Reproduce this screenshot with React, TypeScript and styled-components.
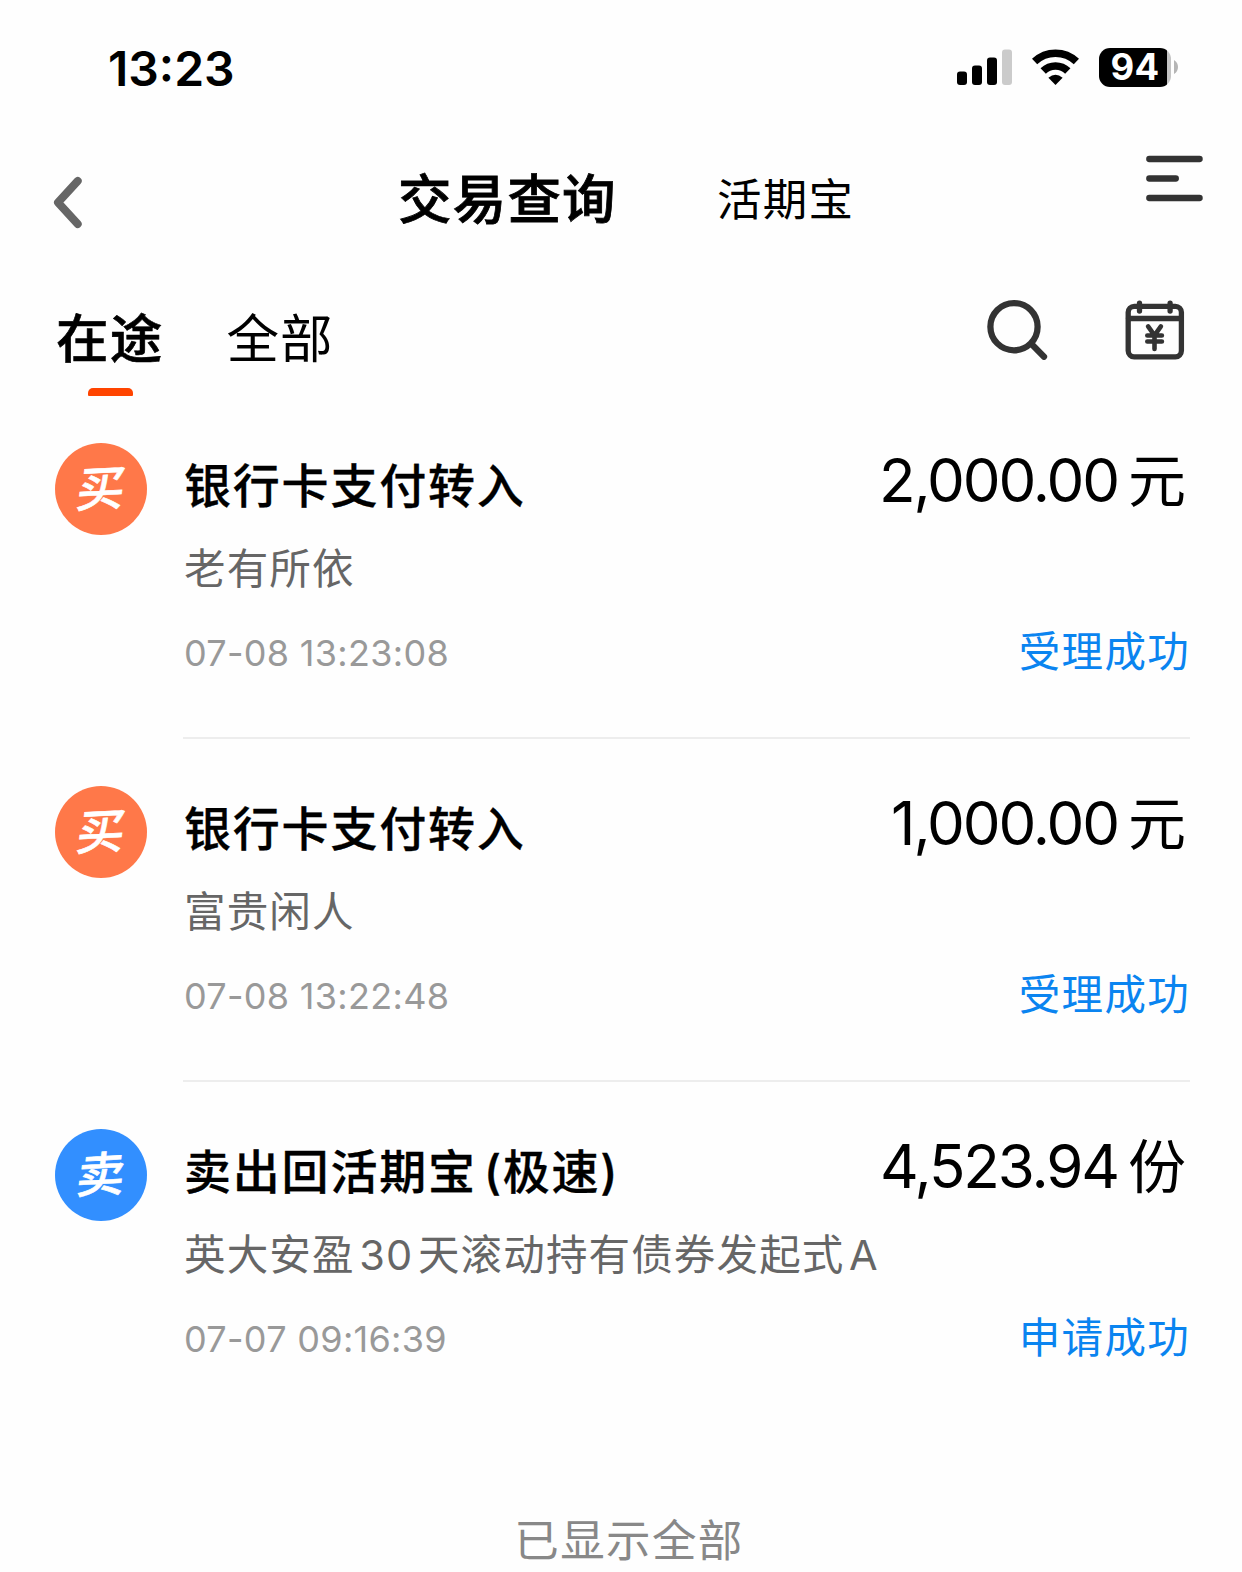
import React from "react";
import styled, { createGlobalStyle } from "styled-components";

const GlobalStyle = createGlobalStyle`
  * { box-sizing: border-box; }
  html, body { margin: 0; padding: 0; background: #fff; }
  body { font-family: Inter, "Noto Sans CJK SC", sans-serif; color: #000; overflow: hidden; }
  svg { display: block; flex: none; }
`;

const Screen = styled.main`
  width: 1242px;
  height: 1572px;
  overflow: hidden;
  display: flex;
  flex-direction: column;
  background: #fefefe;
`;

const StatusBar = styled.header`
  height: 138px;
  flex: none;
  display: flex;
  align-items: center;
  justify-content: space-between;
  padding: 0 64px 2px 108px;
`;

const Clock = styled.time`
  padding-top: 2px;
  font-size: 48px;
  font-weight: 600;
  line-height: 60px;
  letter-spacing: 0;
`;

const Indicators = styled.div`
  display: flex;
  align-items: center;
  gap: 20px;
  padding-bottom: 2px;
`;

const Battery = styled.div`
  display: flex;
  align-items: center;
  gap: 3px;
`;

const BatteryBody = styled.div`
  width: 72px;
  height: 39px;
  border-radius: 11px;
  background: linear-gradient(to right, #000 68px, #c4c4c4 68px);
  color: #fff;
  font-size: 36.5px;
  font-weight: 700;
  line-height: 39px;
  text-align: center;
  letter-spacing: 0.2px;
`;

const NavBar = styled.nav`
  height: 132px;
  flex: none;
  display: grid;
  grid-template-columns: 398px 319px 1fr auto;
  align-items: start;
  padding: 0 37px 0 0;
`;

const BackButton = styled.div`
  padding: 37px 0 0 52px;
`;

const NavTitle = styled.h1`
  margin: 0;
  padding-top: 26px;
  font-size: 53.5px;
  font-weight: 500;
  line-height: 72px;
  letter-spacing: 1.2px;
  -webkit-text-stroke: 0.8px currentColor;
`;

const NavLink = styled.span`
  padding-top: 27px;
  font-size: 44.5px;
  line-height: 70px;
  letter-spacing: 1.2px;
`;

const MenuButton = styled.div`
  padding-top: 16px;
`;

const TabBar = styled.section`
  height: 126px;
  flex: none;
  display: flex;
  justify-content: space-between;
  padding: 0 55px 0 56px;
`;

const Tabs = styled.div`
  display: flex;
  gap: 63px;
`;

const Tab = styled.div<{ $active?: boolean }>`
  height: 126px;
  display: flex;
  flex-direction: column;
  align-items: center;
  justify-content: space-between;
  padding-top: 33px;
  font-size: 52.5px;
  line-height: 72px;
  letter-spacing: 1.2px;
  font-weight: ${(p) => (p.$active ? 500 : 400)};
  -webkit-text-stroke: ${(p) => (p.$active ? "0.6px currentColor" : "0")};
`;

const TabMarker = styled.i`
  width: 45px;
  height: 8px;
  margin-left: 2px;
  border-radius: 5px 5px 1px 1px;
  background: #ff4400;
`;

const Tools = styled.div`
  display: flex;
  align-items: flex-start;
  gap: 77px;
  padding-top: 28px;
`;

const List = styled.ul`
  list-style: none;
  margin: 0;
  padding: 0 52px 0 55px;
`;

const Item = styled.li`
  height: 343px;
  display: flex;
  gap: 36px;
`;

const Badge = styled.div<{ $color: string }>`
  width: 92px;
  height: 92px;
  margin-top: 47px;
  flex: none;
  border-radius: 50%;
  background: ${(p) => p.$color};
  color: #fff;
  display: flex;
  align-items: center;
  justify-content: center;
`;

const BadgeText = styled.span`
  font-size: 48px;
  font-weight: 500;
  line-height: 92px;
  -webkit-text-stroke: 0.6px currentColor;
  transform: skew(-7deg, -3deg);
`;

const ItemBody = styled.div<{ $divided: boolean }>`
  flex: 1;
  min-width: 0;
  display: flex;
  justify-content: space-between;
  border-bottom: 2px solid ${(p) => (p.$divided ? "#ededed" : "transparent")};
`;

const Details = styled.div`
  flex: 1;
  min-width: 0;
  display: flex;
  flex-direction: column;
  padding: 60px 0 0 1px;
  white-space: nowrap;
`;

const ItemTitle = styled.h2`
  margin: 0;
  font-size: 47px;
  font-weight: 500;
  line-height: 60px;
  letter-spacing: 1.8px;
  word-spacing: -7.5px;
  -webkit-text-stroke: 0.3px currentColor;
`;

const Fund = styled.span`
  margin-top: 28px;
  font-size: 41.5px;
  line-height: 50px;
  letter-spacing: 1.15px;
  word-spacing: -8.2px;
  color: #666;
`;

const Stamp = styled.time`
  margin-top: 36px;
  font-size: 36px;
  line-height: 46px;
  letter-spacing: 0.3px;
  color: #999;
`;

const Result = styled.div`
  flex: none;
  display: flex;
  flex-direction: column;
  align-items: flex-end;
  padding-top: 49px;
  white-space: nowrap;
`;

const Amount = styled.div`
  display: flex;
  align-items: center;
  gap: 10px;
  padding-right: 4px;
  font-size: 60px;
  line-height: 70px;
  letter-spacing: -2.1px;
`;

const Unit = styled.span`
  padding-top: 2px;
  line-height: 68px;
  font-size: 58px;
  letter-spacing: 0;
`;

const State = styled.span`
  margin-top: 112px;
  font-size: 41.5px;
  line-height: 50px;
  letter-spacing: 1.3px;
  color: #0a84f0;
`;

const Footer = styled.footer`
  padding: 81px 0 0 16px;
  text-align: center;
  font-size: 44.5px;
  line-height: 70px;
  letter-spacing: 1.4px;
  color: #888;
`;

type Trade = {
  kind: "buy" | "sell";
  title: string;
  fund: string;
  time: string;
  amount: string;
  unit: string;
  state: string;
};

const trades: Trade[] = [
  { kind: "buy", title: "银行卡支付转入", fund: "老有所依", time: "07-08 13:23:08", amount: "2,000.00", unit: "元", state: "受理成功" },
  { kind: "buy", title: "银行卡支付转入", fund: "富贵闲人", time: "07-08 13:22:48", amount: "1,000.00", unit: "元", state: "受理成功" },
  { kind: "sell", title: "卖出回活期宝 (极速)", fund: "英大安盈 30 天滚动持有债券发起式 A", time: "07-07 09:16:39", amount: "4,523.94", unit: "份", state: "申请成功" },
];

const SignalIcon = () => (
  <svg width="55" height="38" viewBox="0 0 55 38">
    <rect x="0" y="23.5" width="10" height="13.5" rx="3" />
    <rect x="15" y="17.5" width="10" height="19.5" rx="3" />
    <rect x="30" y="9.5" width="10" height="27.5" rx="3" />
    <rect x="45" y="1.5" width="10" height="35.5" rx="3" fill="#cbcbcb" />
  </svg>
);

const WifiIcon = () => (
  <svg width="47" height="37" viewBox="0 0 47 37" fill="none" stroke="#000" strokeWidth="7.6">
    <path d="M2.6 12.6A30.5 30.5 0 0 1 44.4 12.6" />
    <path d="M11.2 22A17.6 17.6 0 0 1 35.8 22" />
    <path d="M23.5 36L16.4 28.8Q23.5 22.6 30.6 28.8Z" fill="#000" stroke="none" />
  </svg>
);

const BatteryCap = () => (
  <svg width="4" height="14" viewBox="0 0 4 14">
    <path d="M0 0Q4 2.5 4 7T0 14Z" fill="#b5b5b5" />
  </svg>
);

const BackIcon = () => (
  <svg width="32" height="56" viewBox="0 0 32 56" fill="none" stroke="#666" strokeWidth="8" strokeLinecap="round" strokeLinejoin="round">
    <path d="M25.7 6L6 27.5L25.7 49" />
  </svg>
);

const MenuIcon = () => (
  <svg width="60" height="50" viewBox="0 0 60 50" fill="none" stroke="#333" strokeWidth="6.3" strokeLinecap="round">
    <path d="M4.3 5H54.6M4.3 24.5H30.8M4.3 44H54.6" />
  </svg>
);

const SearchIcon = () => (
  <svg width="62" height="62" viewBox="0 0 62 62" fill="none" stroke="#333" strokeWidth="6.3" strokeLinecap="round">
    <circle cx="28" cy="28.7" r="23.6" />
    <path d="M45.5 46L58 58.7" />
  </svg>
);

const CalendarIcon = () => (
  <svg width="62" height="62" viewBox="0 0 62 62" fill="none" stroke="#333" strokeWidth="5.3" strokeLinecap="round" strokeLinejoin="round">
    <rect x="3.2" y="8.3" width="53.2" height="50.5" rx="6" />
    <path d="M3.5 20.5H56M14.5 5.2V13M45.1 5.2V13" />
    <path strokeWidth="4.6" d="M23.1 28.4L29.5 37.4L35.9 28.4M29.5 37.4V51M22.3 37.5H36.9M22.3 43.5H36.9" />
  </svg>
);

export default function App() {
  return (
    <Screen>
      <GlobalStyle />
      <StatusBar>
        <Clock>13:23</Clock>
        <Indicators>
          <SignalIcon />
          <WifiIcon />
          <Battery>
            <BatteryBody>94</BatteryBody>
            <BatteryCap />
          </Battery>
        </Indicators>
      </StatusBar>

      <NavBar>
        <BackButton><BackIcon /></BackButton>
        <NavTitle>交易查询</NavTitle>
        <NavLink>活期宝</NavLink>
        <MenuButton><MenuIcon /></MenuButton>
      </NavBar>

      <TabBar>
        <Tabs>
          <Tab $active>在途<TabMarker /></Tab>
          <Tab>全部</Tab>
        </Tabs>
        <Tools>
          <SearchIcon />
          <CalendarIcon />
        </Tools>
      </TabBar>

      <List>
        {trades.map((t, i) => (
          <Item key={t.time}>
            <Badge $color={t.kind === "buy" ? "#ff7849" : "#328fff"}>
              <BadgeText>{t.kind === "buy" ? "买" : "卖"}</BadgeText>
            </Badge>
            <ItemBody $divided={i < trades.length - 1}>
              <Details>
                <ItemTitle>{t.title}</ItemTitle>
                <Fund>{t.fund}</Fund>
                <Stamp>{t.time}</Stamp>
              </Details>
              <Result>
                <Amount>{t.amount}<Unit>{t.unit}</Unit></Amount>
                <State>{t.state}</State>
              </Result>
            </ItemBody>
          </Item>
        ))}
      </List>

      <Footer>已显示全部</Footer>
    </Screen>
  );
}
